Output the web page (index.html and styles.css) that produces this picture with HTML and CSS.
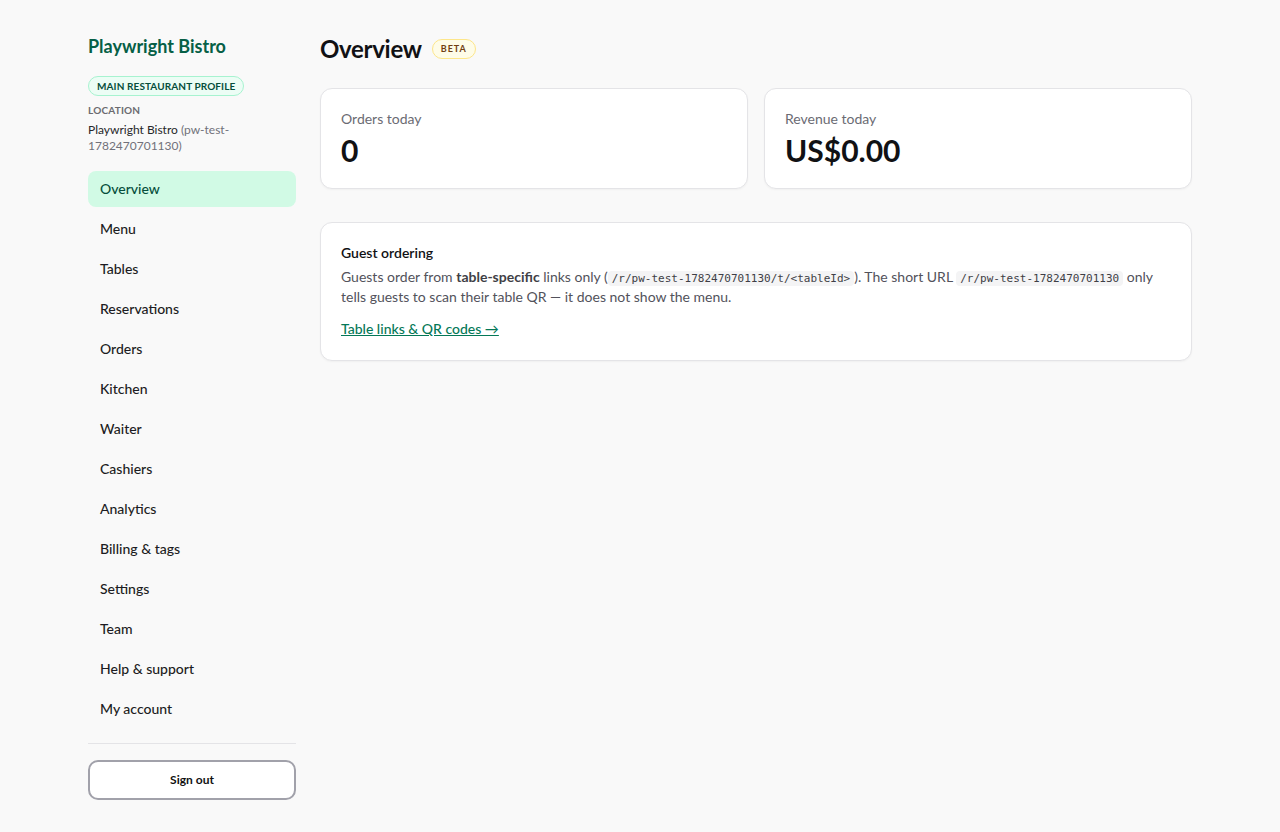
FILE: index.html
```html
<!DOCTYPE html>
<html lang="en">
<head>
<meta charset="utf-8">
<title>Overview · Playwright Bistro</title>
<link rel="stylesheet" href="styles.css">
</head>
<body>
<div class="shell">
  <aside class="sidebar">
    <div class="brand">Playwright Bistro</div>
    <span class="profile-badge">Main restaurant profile</span>
    <div class="loc-label">Location</div>
    <div class="loc-name">Playwright Bistro <span class="loc-slug">(pw-test-1782470701130)</span></div>
    <nav class="nav">
      <a class="nav-item active" href="#">Overview</a>
      <a class="nav-item" href="#">Menu</a>
      <a class="nav-item" href="#">Tables</a>
      <a class="nav-item" href="#">Reservations</a>
      <a class="nav-item" href="#">Orders</a>
      <a class="nav-item" href="#">Kitchen</a>
      <a class="nav-item" href="#">Waiter</a>
      <a class="nav-item" href="#">Cashiers</a>
      <a class="nav-item" href="#">Analytics</a>
      <a class="nav-item" href="#">Billing &amp; tags</a>
      <a class="nav-item" href="#">Settings</a>
      <a class="nav-item" href="#">Team</a>
      <a class="nav-item" href="#">Help &amp; support</a>
      <a class="nav-item" href="#">My account</a>
    </nav>
    <div class="sidebar-foot">
      <button class="signout" type="button">Sign out</button>
    </div>
  </aside>
  <main class="main">
    <div class="title-row">
      <h1 class="title">Overview</h1>
      <span class="beta">Beta</span>
    </div>
    <div class="stats">
      <div class="card stat">
        <div class="stat-label">Orders today</div>
        <div class="stat-value">0</div>
      </div>
      <div class="card stat">
        <div class="stat-label">Revenue today</div>
        <div class="stat-value">US$0.00</div>
      </div>
    </div>
    <div class="card info">
      <h2 class="info-title">Guest ordering</h2>
      <p class="info-text">Guests order from <strong>table-specific</strong> links only (<code>/r/pw-test-1782470701130/t/&lt;tableId&gt;</code>). The short URL <code>/r/pw-test-1782470701130</code> only tells guests to scan their table QR — it does not show the menu.</p>
      <a class="info-link" href="#">Table links &amp; QR codes →</a>
    </div>
  </main>
</div>
</body>
</html>
```

FILE: styles.css
```css
* { box-sizing: border-box; }

html, body {
  margin: 0;
  background: #f9f9f9;
  color: #18181b;
  font-family: "Lato", "Noto Sans", sans-serif;
}

.shell {
  max-width: 1104px;
  margin: 0 auto;
  padding-top: 32px;
  display: flex;
  gap: 24px;
  align-items: flex-start;
}

/* Sidebar */
.sidebar {
  width: 208px;
  flex: none;
  display: flex;
  flex-direction: column;
}

.brand {
  font-size: 18px;
  line-height: 28px;
  font-weight: 700;
  color: #065f46;
}

.profile-badge {
  align-self: flex-start;
  margin-top: 16px;
  padding: 3px 8px;
  border: 1px solid #a7f3d0;
  border-radius: 999px;
  background: #ecfdf5;
  color: #064e3b;
  font-size: 10px;
  line-height: 12px;
  font-weight: 700;
  letter-spacing: 0.1px;
  text-transform: uppercase;
}

.loc-label {
  margin-top: 7px;
  font-size: 10px;
  line-height: 14px;
  font-weight: 700;
  color: #6b6b70;
  text-transform: uppercase;
  letter-spacing: 0.2px;
}

.loc-name {
  margin-top: 5px;
  font-size: 12px;
  line-height: 16px;
  color: #27272a;
}

.loc-slug { color: #71717a; }

.nav {
  margin-top: 17px;
  display: flex;
  flex-direction: column;
  gap: 4px;
}

.nav-item {
  display: block;
  height: 36px;
  line-height: 36px;
  padding: 0 12px;
  border-radius: 8px;
  font-size: 14px;
  font-weight: 500;
  color: #1c1c22;
  text-decoration: none;
}

.nav-item.active {
  background: #d1fae5;
  color: #064e3b;
}

.sidebar-foot {
  margin-top: 16px;
  padding-top: 16px;
  border-top: 1px solid #e4e4e7;
}

.signout {
  width: 100%;
  height: 40px;
  padding: 0 0 1px;
  border: 2px solid #a1a1aa;
  border-radius: 10px;
  background: #ffffff;
  font-family: inherit;
  font-size: 12px;
  font-weight: 700;
  color: #111;
  cursor: pointer;
}

/* Main column */
.main {
  flex: 1;
  min-width: 0;
}

.title-row {
  display: flex;
  align-items: center;
  gap: 10px;
  height: 33px;
}

.title {
  margin: 0;
  font-size: 24px;
  line-height: 32px;
  font-weight: 700;
  letter-spacing: -0.3px;
  color: #111114;
}

.beta {
  padding: 3px 8px;
  border: 1px solid #fde68a;
  border-radius: 999px;
  background: #fefce8;
  color: #713f12;
  font-size: 9px;
  line-height: 12px;
  font-weight: 700;
  letter-spacing: 1px;
  text-transform: uppercase;
}

.stats {
  margin-top: 23px;
  display: grid;
  grid-template-columns: 1fr 1fr;
  gap: 16px;
}

.card {
  background: #ffffff;
  border: 1px solid #e4e4e7;
  border-radius: 12px;
  box-shadow: 0 1px 2px rgba(0, 0, 0, 0.04);
}

.stat { padding: 20px; height: 101px; }

.stat-label {
  font-size: 14px;
  line-height: 20px;
  color: #6b6b73;
}

.stat-value {
  margin-top: 3px;
  font-size: 30px;
  line-height: 36px;
  font-weight: 700;
  color: #111114;
}

.info {
  margin-top: 33px;
  padding: 20px 20px 21px;
}

.info-title {
  margin: 0;
  font-size: 14px;
  line-height: 20px;
  font-weight: 600;
  color: #111114;
}

.info-text {
  margin: 4px 0 0;
  font-size: 14px;
  line-height: 20px;
  color: #52525b;
}

.info-text strong { color: #3f3f46; font-weight: 700; }

.info-text code {
  font-family: "DejaVu Sans Mono", monospace;
  font-size: 11px;
  line-height: 16px;
  background: #f4f4f5;
  border-radius: 4px;
  padding: 1px 4px;
  color: #3f3f46;
}

.info-link {
  display: inline-block;
  margin-top: 12px;
  font-size: 14px;
  line-height: 20px;
  font-weight: 500;
  color: #047857;
  text-decoration: underline;
}
```
